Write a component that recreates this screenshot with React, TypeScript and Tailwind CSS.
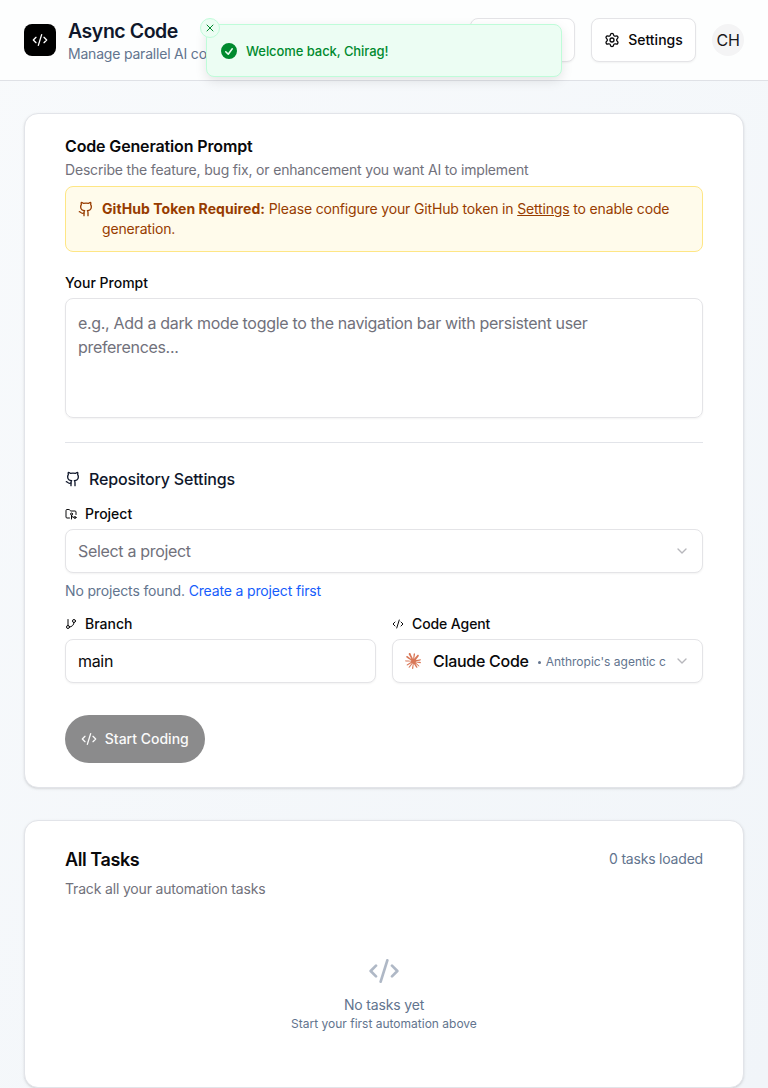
import React from "react";
import { ChevronDown, CodeXml, FolderGit2, GitBranch, Github, Settings, X } from "lucide-react";
import { SiClaude } from "react-icons/si";

const card =
  "rounded-[14px] border border-[#e2e4e9] bg-white px-10 shadow-[0_1px_3px_rgba(0,0,0,0.1),0_1px_2px_-1px_rgba(0,0,0,0.1)]";
const field =
  "flex h-11 items-center rounded-lg border border-[#e4e4e7] bg-white px-3 text-base tracking-[-0.32px] shadow-[0_1px_2px_rgba(0,0,0,0.05)]";
const label = "flex items-center gap-2 text-sm leading-[14px] font-medium text-[#09090b]";

function Toast() {
  return (
    <div className="absolute top-6 left-[206px] z-10 flex h-[53px] w-[356px] items-center gap-[7px] rounded-lg border border-[#bffcd9] bg-[#ecfdf3] px-3 pt-px shadow-[0_4px_12px_rgba(0,0,0,0.1)]">
      <button className="absolute -top-[7px] -left-[7px] flex size-5 items-center justify-center rounded-full border border-[#bffcd9] bg-[#ecfdf3] text-[#008a2e]">
        <X size={12} strokeWidth={2} />
      </button>
      <svg viewBox="0 0 20 20" fill="currentColor" className="size-5 shrink-0 text-[#008a2e]">
        <path
          fillRule="evenodd"
          clipRule="evenodd"
          d="M10 18a8 8 0 100-16 8 8 0 000 16zm3.857-9.809a.75.75 0 00-1.214-.882l-3.483 4.79-1.88-1.88a.75.75 0 10-1.06 1.061l2.5 2.5a.75.75 0 001.137-.089l4-5.5z"
        />
      </svg>
      <span className="pt-px text-[13px] leading-[19.5px] font-medium tracking-[-0.07px] text-[#008a2e]">
        Welcome back, Chirag!
      </span>
    </div>
  );
}

function Header() {
  return (
    <header className="relative flex h-[81px] items-center justify-between border-b border-[#dfe1e6] bg-[#fdfefe] px-6">
      <div className="flex items-center gap-3">
        <div className="flex size-8 items-center justify-center rounded-lg bg-black text-white">
          <CodeXml size={16} />
        </div>
        <div className="w-[330px]">
          <h1 className="pt-[2px] text-[19.5px] leading-[26px] font-semibold tracking-[-0.45px] text-[#0f172b]">
            Async Code
          </h1>
          <p className="truncate text-sm leading-5 tracking-[-0.2px] text-[#62748e]">
            Manage parallel AI code generation
          </p>
        </div>
      </div>
      <div className="flex items-center gap-4">
        <button
          aria-label="Projects"
          className="h-11 w-[105px] rounded-lg border border-[#e4e4e7] bg-white shadow-[0_1px_2px_rgba(0,0,0,0.05)]"
        />
        <button className="flex h-11 w-[105px] items-center justify-center gap-2 rounded-lg border border-[#e4e4e7] bg-white text-sm font-medium text-[#09090b] shadow-[0_1px_2px_rgba(0,0,0,0.05)]">
          <Settings size={16} />
          Settings
        </button>
        <div className="flex size-8 items-center justify-center rounded-full bg-[#f4f4f5] text-base tracking-[-0.3px] text-[#18181b]">
          CH
        </div>
      </div>
      <Toast />
    </header>
  );
}

export default function App() {
  return (
    <div className="h-[1088px] w-[768px] overflow-hidden bg-linear-to-br from-[#f8fafc] to-[#f1f5f9] font-['Inter',sans-serif] text-[#09090b]">
      <Header />
      <main className="flex flex-col gap-8 px-6 pt-8">
        <section className={`${card} h-[675px] pt-6`}>
          <h2 className="text-base leading-4 font-semibold tracking-[-0.14px]">Code Generation Prompt</h2>
          <p className="mt-[6px] text-sm leading-5 tracking-[-0.18px] text-[#71717b]">
            Describe the feature, bug fix, or enhancement you want AI to implement
          </p>
          <div className="mt-1.5 flex h-[66px] gap-2 rounded-lg border border-[#fee685] bg-[#fffbeb] px-3 pt-3 text-sm leading-5 text-[#973c00]">
            <Github size={16} className="mt-[2px] shrink-0" />
            <p className="tracking-[-0.16px]">
              <strong className="font-bold tracking-[0.06px]">GitHub Token Required:</strong> Please configure your
              GitHub token in <a className="underline">Settings</a> to enable code generation.
            </p>
          </div>
          <div className={`${label} mt-6`}>Your Prompt</div>
          <div className="mt-2 h-[120px] rounded-lg border border-[#e4e4e7] px-3 pt-3 text-base leading-6 tracking-[-0.32px] text-[#71717b] shadow-[0_1px_2px_rgba(0,0,0,0.05)]">
            e.g., Add a dark mode toggle to the navigation bar with persistent user preferences...
          </div>
          <div className="mt-6 border-t border-[#e2e4e9]" />
          <h3 className="mt-6 flex items-center gap-2 text-base leading-6 font-medium tracking-[-0.16px] text-[#0f172b]">
            <Github size={16} />
            Repository Settings
          </h3>
          <div className={`${label} mt-4`}>
            <FolderGit2 size={12} />
            Project
          </div>
          <div className={`${field} mt-2 justify-between text-[#71717b]`}>
            Select a project
            <ChevronDown size={16} className="opacity-50" />
          </div>
          <p className="mt-2 text-sm leading-5 tracking-[-0.15px] text-[#62748e]">
            No projects found. <a className="text-[#155dfc]">Create a project first</a>
          </p>
          <div className="mt-4 grid grid-cols-2 gap-4">
            <div>
              <div className={label}>
                <GitBranch size={12} />
                Branch
              </div>
              <div className={`${field} mt-2`}>main</div>
            </div>
            <div className="min-w-0">
              <div className={`${label} tracking-[-0.1px]`}>
                <CodeXml size={12} />
                Code Agent
              </div>
              <div className={`${field} mt-2 justify-between`}>
                <div className="flex items-center">
                  <SiClaude size={16} className="text-[#d97757]" />
                  <span className="ml-3 font-medium tracking-[-0.28px]">Claude Code</span>
                  <span className="ml-[9px] size-[3px] translate-y-px rounded-full bg-[#62748e]" />
                  <span className="ml-[5px] pt-px text-xs tracking-normal text-[#62748e]">Anthropic's agentic c</span>
                </div>
                <ChevronDown size={16} className="text-[#71717b] opacity-50" />
              </div>
            </div>
          </div>
          <button className="mt-8 flex h-12 w-[139.5px] items-center justify-center gap-2 rounded-full bg-[#8b8b8c] text-sm font-medium text-[#fafafa]">
            <CodeXml size={16} />
            Start Coding
          </button>
        </section>
        <section className={`${card} h-[268px] pt-6`}>
          <div className="flex items-start justify-between">
            <h2 className="pt-px text-lg leading-7 font-semibold tracking-[-0.42px]">All Tasks</h2>
            <span className="pt-1 text-sm leading-5 tracking-[-0.2px] text-[#62748e]">0 tasks loaded</span>
          </div>
          <p className="mt-[5px] text-sm leading-5 tracking-[-0.17px] text-[#71717b]">
            Track all your automation tasks
          </p>
          <div className="mt-14 flex flex-col items-center text-[#62748e]">
            <CodeXml size={32} className="opacity-50" />
            <p className="mt-2 text-sm leading-5 tracking-[-0.17px]">No tasks yet</p>
            <p className="pt-px text-xs leading-4">Start your first automation above</p>
          </div>
        </section>
      </main>
    </div>
  );
}
